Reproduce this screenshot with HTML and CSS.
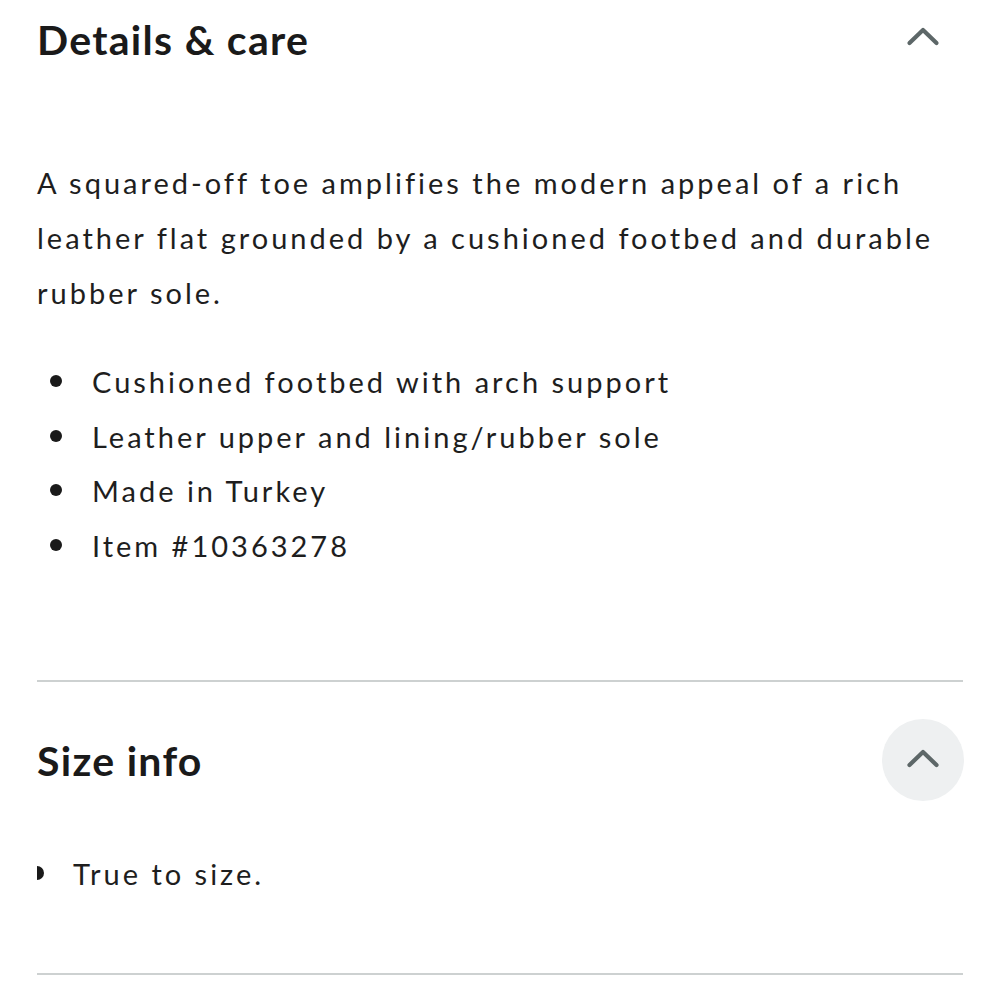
FILE: index.html
```html
<!DOCTYPE html>
<html lang="en">
<head>
<meta charset="utf-8">
<link rel="stylesheet" href="styles.css">
</head>
<body>
<main class="page">
  <section class="panel panel-details">
    <header class="panel-head">
      <h2 class="panel-title">Details &amp; care</h2>
      <button class="toggle" aria-label="Collapse">
        <svg width="34" height="22" viewBox="0 0 34 22"><path d="M3.5 18 L17 5 L30.5 18" fill="none" stroke="#5d6768" stroke-width="4.2" stroke-linecap="round" stroke-linejoin="round"/></svg>
      </button>
    </header>
    <p class="desc">A squared-off toe amplifies the modern appeal of a rich leather flat grounded by a cushioned footbed and durable rubber sole.</p>
    <ul class="bullets">
      <li>Cushioned footbed with arch support</li>
      <li>Leather upper and lining/rubber sole</li>
      <li>Made in Turkey</li>
      <li>Item #10363278</li>
    </ul>
  </section>
  <section class="panel panel-size">
    <header class="panel-head">
      <h2 class="panel-title">Size info</h2>
      <button class="toggle toggle-circle" aria-label="Collapse">
        <svg width="34" height="22" viewBox="0 0 34 22"><path d="M3.5 18 L17 5 L30.5 18" fill="none" stroke="#5d6768" stroke-width="4.2" stroke-linecap="round" stroke-linejoin="round"/></svg>
      </button>
    </header>
    <div class="size-row"><span class="half-dot"></span><span class="size-text">True to size.</span></div>
  </section>
</main>
</body>
</html>
```

FILE: styles.css
```css
html, body {
  margin: 0;
  padding: 0;
  background: #ffffff;
}
body {
  font-family: "Lato", "Noto Sans", sans-serif;
  color: #1c1c1c;
}
.page {
  width: 926px;
  margin-left: 37px;
}
.panel-details {
  border-bottom: 2px solid #cdd1d1;
  padding-bottom: 107px;
}
.panel-size {
  border-bottom: 2px solid #cdd1d1;
  padding-bottom: 72px;
}
.panel-head {
  display: flex;
  align-items: center;
  justify-content: space-between;
}
.panel-details .panel-head {
  height: 80px;
}
.panel-size .panel-head {
  height: 156px;
}
.panel-title {
  margin: 0;
  font-size: 41px;
  font-weight: 700;
  letter-spacing: 1.3px;
  color: #1a1a1a;
}
.panel-details .panel-title {
  margin-top: -2px;
}
.panel-size .panel-title {
  margin-top: 0;
}
.toggle {
  width: 82px;
  height: 82px;
  border: none;
  border-radius: 50%;
  background: transparent;
  display: flex;
  align-items: center;
  justify-content: center;
  padding: 0;
  margin-right: -1px;
}
.panel-details .toggle {
  margin-top: -4px;
}
.toggle svg {
  margin-top: -4px;
}
.toggle-circle {
  background: #eef0f1;
}
.desc {
  margin: 75px 0 0;
  font-size: 29px;
  line-height: 55px;
  letter-spacing: 3px;
  color: #1e1e1e;
}
.bullets {
  list-style: none;
  margin: 35px 0 0;
  padding: 0;
  font-size: 29px;
  line-height: 54.5px;
  letter-spacing: 3px;
  color: #1e1e1e;
}
.bullets li {
  display: flex;
  align-items: center;
}
.bullets li::before {
  content: "";
  width: 12px;
  height: 12px;
  border-radius: 50%;
  background: #1a1a1a;
  margin-left: 13px;
  margin-right: 30px;
  flex: none;
  margin-top: -2px;
}
.size-row {
  display: flex;
  align-items: center;
  margin-top: 9px;
  font-size: 29px;
  line-height: 54px;
  letter-spacing: 3px;
  color: #1e1e1e;
}
.half-dot {
  width: 7px;
  height: 14px;
  overflow: hidden;
  position: relative;
  margin-right: 29px;
  margin-top: -3px;
}
.half-dot::before {
  content: "";
  position: absolute;
  left: -7px;
  top: 0;
  width: 14px;
  height: 14px;
  border-radius: 50%;
  background: #1a1a1a;
}
```
